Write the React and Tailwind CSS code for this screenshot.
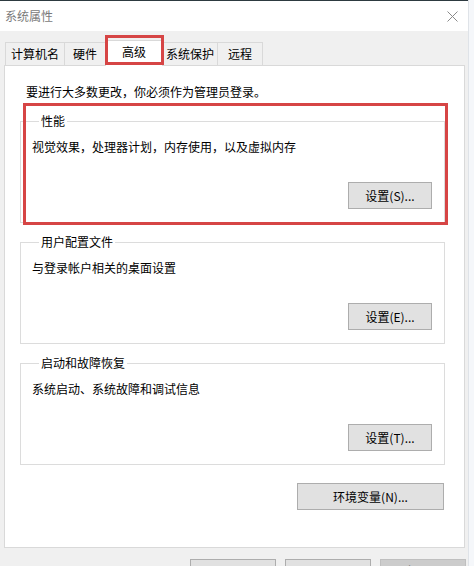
import React from "react";

const tabs = [
  { label: "计算机名", w: "w-[60px]" },
  { label: "硬件", w: "w-[42px]" },
  { label: "高级", w: "w-[58px]", active: true },
  { label: "系统保护", w: "w-[56px]" },
  { label: "远程", w: "w-[46px]" },
];

const groups = [
  { title: "性能", desc: "视觉效果，处理器计划，内存使用，以及虚拟内存", btn: "设置(S)..." },
  { title: "用户配置文件", desc: "与登录帐户相关的桌面设置", btn: "设置(E)..." },
  { title: "启动和故障恢复", desc: "系统启动、系统故障和调试信息", btn: "设置(T)..." },
];

function Btn({ children, className = "" }) {
  return (
    <button
      className={`h-[27px] bg-[#e1e1e1] border border-[#adadad] text-[12px] leading-none text-black flex items-center justify-center ${className}`}
    >
      {children}
    </button>
  );
}

export default function App() {
  return (
    <div
      className="relative w-[474px] h-[566px] overflow-hidden bg-[#f5f7fa] text-black"
      style={{ fontFamily: '"Noto Sans CJK SC", "Noto Sans", sans-serif' }}
    >
      <div className="w-[469px] h-full bg-[#f0f0f0] border-r border-[#dfe3e8]">
        {/* title bar */}
        <div className="h-[31px] bg-white border-t border-[#2d3a40] flex items-center justify-between pl-[5px] pr-[10px]">
          <span className="text-[12px] text-[#7a7a7a]">系统属性</span>
          <svg width="11" height="11" viewBox="0 0 11 11">
            <path d="M0.5 0.5 L10.5 10.5 M10.5 0.5 L0.5 10.5" stroke="#8a8a8a" strokeWidth="1" />
          </svg>
        </div>

        {/* tabs */}
        <div className="relative mt-[8px] pl-[5px] flex items-end h-[26px]">
          {tabs.map((t) =>
            t.active ? (
              <div
                key={t.label}
                className={`${t.w} h-[26px] bg-white border-x border-t border-[#d9d9d9] -mb-px -mr-px relative z-10 flex items-center justify-center text-[12px] pb-[3px]`}
              >
                {t.label}
              </div>
            ) : (
              <div
                key={t.label}
                className={`${t.w} h-[23px] bg-[#f0f0f0] border-x border-t border-[#d9d9d9] -mr-px flex items-center justify-center text-[12px]`}
              >
                {t.label}
              </div>
            )
          )}
          <div className="absolute left-[105px] top-[-4px] w-[59px] h-[30px] border-[3px] border-[#d64545] z-20" />
        </div>

        {/* panel */}
        <div className="relative ml-[4px] w-[461px] h-[483px] bg-white border border-[#d9d9d9] pl-[15px] pt-[18px]">
          <p className="pl-[6px] text-[12px] leading-[16px]">要进行大多数更改，你必须作为管理员登录。</p>

          <div className="mt-[13px] flex flex-col gap-[11px] w-[425px]">
            {groups.map((g) => (
              <fieldset key={g.title} className="border border-[#dcdcdc] pl-[11px] pr-[12px] pb-[13px]">
                <legend className="ml-[7px] px-[2px] text-[12px] leading-[16px]">{g.title}</legend>
                <p className="mt-[10px] text-[12px] leading-[16px]">{g.desc}</p>
                <div className="mt-[27px] flex justify-end">
                  <Btn className="w-[84px]">{g.btn}</Btn>
                </div>
              </fieldset>
            ))}
          </div>

          <div className="mt-[18px] w-[424px] flex justify-end">
            <Btn className="w-[147px]">环境变量(N)...</Btn>
          </div>

          {/* red highlight */}
          <div className="absolute left-[18px] top-[37px] w-[425px] h-[122px] border-[3px] border-[#d64545]" />
        </div>

        {/* bottom buttons */}
        <div className="mt-[11px] flex justify-end gap-[9px] pr-[2px]">
          <Btn className="w-[86px] h-[23px]">确定</Btn>
          <Btn className="w-[86px] h-[23px]">取消</Btn>
          <button className="w-[86px] h-[23px] bg-[#cccccc] border border-[#bfbfbf] text-[12px] text-[#838383]">应用(A)</button>
        </div>
      </div>
    </div>
  );
}
